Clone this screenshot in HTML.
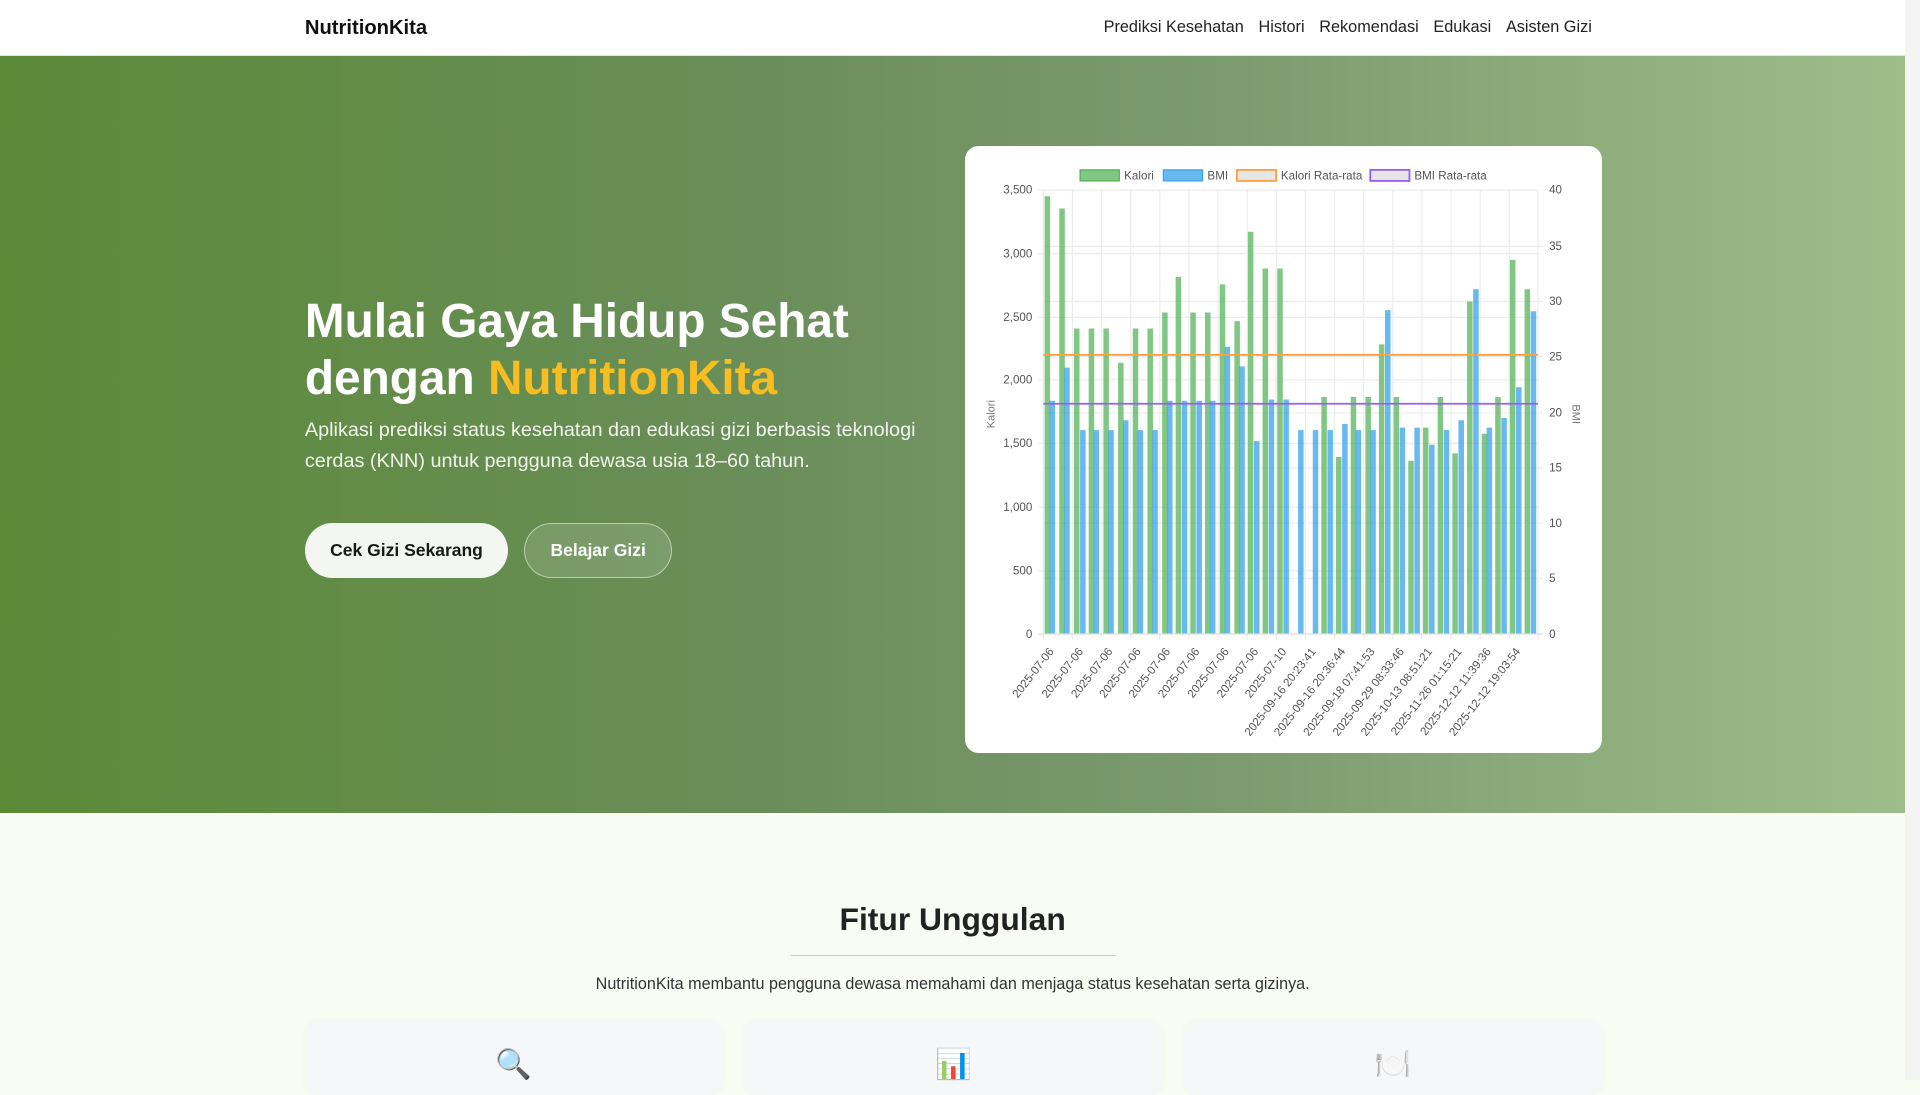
<!DOCTYPE html>
<html><head><meta charset="utf-8"><style>
html{zoom:1.22449}
*{margin:0;padding:0;box-sizing:border-box}
body{width:1568px;height:882px;overflow:hidden;position:relative;font-family:"Liberation Sans",sans-serif;background:#f9fcf3}
.nav{position:absolute;left:0;top:0;width:1556px;height:46px;background:#fff;border-bottom:1px solid #e6e6e6}
.brand{position:absolute;left:249px;top:14px;font-weight:bold;font-size:16.5px;color:#111}
.links{position:absolute;right:256px;top:15px;font-size:13.3px;color:#222}
.links span{margin-left:12px}
.hero{position:absolute;left:0;top:46px;width:1556px;height:618px;background:linear-gradient(90deg,#5b8a37 0%,#6a8e5a 40%,#7c9c6f 65%,#9dbd89 100%)}
h1{position:absolute;left:249px;top:239px;font-size:39px;line-height:47px;color:#fff;font-weight:bold}
h1 em{font-style:normal;color:#f7bd21}
.sub{position:absolute;left:249px;top:339px;width:520px;font-size:16.2px;line-height:25px;color:#f2f5ee}
.b1{position:absolute;left:249px;top:427px;width:166px;height:45px;border-radius:23px;background:#f4f6f2;color:#1a1a1a;font-weight:bold;font-size:14.3px;text-align:center;line-height:45px}
.b2{position:absolute;left:428px;top:427px;width:121px;height:45px;border-radius:23px;background:rgba(255,255,255,.13);border:1px solid rgba(255,255,255,.5);color:#fff;font-weight:bold;font-size:14.3px;text-align:center;line-height:43px}
.card{position:absolute;left:788px;top:119px;width:520px;height:496px;background:#fff;border-radius:11px}
.sb{position:absolute;left:1556px;top:0;width:12px;height:882px;background:#f4f4f4}
h2{position:absolute;left:0;width:1556px;text-align:center;top:736px;font-size:26px;color:#222}
.hr{position:absolute;left:646px;top:780px;width:265px;height:1px;background:#ccc}
.p{position:absolute;left:0;width:1556px;text-align:center;top:796px;font-size:13.2px;color:#333}
.f{position:absolute;top:834px;width:341px;height:60px;background:#f6f7f9;border-radius:12px;box-shadow:0 0 6px rgba(0,0,0,.04);text-align:center;font-size:24px;padding-top:22px}
</style></head><body>
<div class="nav"><div class="brand">NutritionKita</div><div class="links"><span>Prediksi Kesehatan</span><span>Histori</span><span>Rekomendasi</span><span>Edukasi</span><span>Asisten Gizi</span></div></div>
<div class="hero"></div>
<h1>Mulai Gaya Hidup Sehat<br>dengan <em>NutritionKita</em></h1>
<div class="sub">Aplikasi prediksi status kesehatan dan edukasi gizi berbasis teknologi cerdas (KNN) untuk pengguna dewasa usia 18–60 tahun.</div>
<div class="b1">Cek Gizi Sekarang</div><div class="b2">Belajar Gizi</div>
<div class="card"><svg width="520" height="496" viewBox="788 119 520 496" font-family="Liberation Sans,sans-serif" font-size="9.5" fill="#555">
<g stroke="#ececec" stroke-width="1">
<line x1="848" y1="155" x2="1256" y2="155"/><line x1="848" y1="207" x2="1256" y2="207"/><line x1="848" y1="259" x2="1256" y2="259"/><line x1="848" y1="310" x2="1256" y2="310"/><line x1="848" y1="362" x2="1256" y2="362"/><line x1="848" y1="414" x2="1256" y2="414"/><line x1="848" y1="466" x2="1256" y2="466"/>
<line x1="852" y1="201" x2="1260" y2="201"/><line x1="852" y1="246" x2="1260" y2="246"/><line x1="852" y1="291" x2="1260" y2="291"/><line x1="852" y1="337" x2="1260" y2="337"/><line x1="852" y1="382" x2="1260" y2="382"/><line x1="852" y1="427" x2="1260" y2="427"/><line x1="852" y1="472" x2="1260" y2="472"/>
<line x1="852" y1="155" x2="852" y2="522"/><line x1="875.8" y1="155" x2="875.8" y2="522"/><line x1="899.6" y1="155" x2="899.6" y2="522"/><line x1="923.3" y1="155" x2="923.3" y2="522"/><line x1="947.1" y1="155" x2="947.1" y2="522"/><line x1="970.9" y1="155" x2="970.9" y2="522"/><line x1="994.7" y1="155" x2="994.7" y2="522"/><line x1="1018.5" y1="155" x2="1018.5" y2="522"/><line x1="1042.2" y1="155" x2="1042.2" y2="522"/><line x1="1066" y1="155" x2="1066" y2="522"/><line x1="1089.8" y1="155" x2="1089.8" y2="522"/><line x1="1113.6" y1="155" x2="1113.6" y2="522"/><line x1="1137.4" y1="155" x2="1137.4" y2="522"/><line x1="1161.1" y1="155" x2="1161.1" y2="522"/><line x1="1184.9" y1="155" x2="1184.9" y2="522"/><line x1="1208.7" y1="155" x2="1208.7" y2="522"/><line x1="1232.5" y1="155" x2="1232.5" y2="522"/><line x1="1256" y1="155" x2="1256" y2="522"/>
</g>
<line x1="848" y1="517.5" x2="1260" y2="517.5" stroke="#ddd"/>
<g>
<path fill="rgba(76,175,80,.7)" d="M853 160h4.5V517H853ZM865 170h4.5V517H865ZM877 268h4.5V517H877ZM889 268h4.5V517H889ZM901 268h4.5V517H901ZM913 296h4.5V517H913ZM925 268h4.5V517H925ZM937 268h4.5V517H937ZM949 255h4.5V517H949ZM960 226h4.5V517H960ZM972 255h4.5V517H972ZM984 255h4.5V517H984ZM996 232h4.5V517H996ZM1008 262h4.5V517H1008ZM1019 189h4.5V517H1019ZM1031 219h4.5V517H1031ZM1043 219h4.5V517H1043ZM1079 324h4.5V517H1079ZM1091 373h4.5V517H1091ZM1103 324h4.5V517H1103ZM1115 324h4.5V517H1115ZM1126 281h4.5V517H1126ZM1138 324h4.5V517H1138ZM1150 376h4.5V517H1150ZM1162 349h4.5V517H1162ZM1174 324h4.5V517H1174ZM1186 370h4.5V517H1186ZM1198 246h4.5V517H1198ZM1210 354h4.5V517H1210ZM1221 324h4.5V517H1221ZM1233 212h4.5V517H1233ZM1245 236h4.5V517H1245Z"/>
<path fill="rgba(54,162,235,.75)" d="M857 327h4.5V517H857ZM869 300h4.5V517H869ZM882 351h4.5V517H882ZM893 351h4.5V517H893ZM905 351h4.5V517H905ZM917 343h4.5V517H917ZM929 351h4.5V517H929ZM941 351h4.5V517H941ZM953 327h4.5V517H953ZM965 327h4.5V517H965ZM977 327h4.5V517H977ZM988 327h4.5V517H988ZM1000 283h4.5V517H1000ZM1012 299h4.5V517H1012ZM1024 360h4.5V517H1024ZM1036 326h4.5V517H1036ZM1048 326h4.5V517H1048ZM1060 351h4.5V517H1060ZM1072 351h4.5V517H1072ZM1084 351h4.5V517H1084ZM1096 346h4.5V517H1096ZM1107 351h4.5V517H1107ZM1119 351h4.5V517H1119ZM1131 253h4.5V517H1131ZM1143 349h4.5V517H1143ZM1155 349h4.5V517H1155ZM1167 363h4.5V517H1167ZM1179 351h4.5V517H1179ZM1191 343h4.5V517H1191ZM1203 236h4.5V517H1203ZM1214 349h4.5V517H1214ZM1226 341h4.5V517H1226ZM1238 316h4.5V517H1238ZM1250 254h4.5V517H1250Z"/>
</g>
<line x1="852" y1="289.5" x2="1256" y2="289.5" stroke="#ffa040" stroke-width="1.5"/>
<line x1="852" y1="329.5" x2="1256" y2="329.5" stroke="#9c5cf0" stroke-width="1.5"/>
<g text-anchor="end"><text x="843" y="158">3,500</text><text x="843" y="210">3,000</text><text x="843" y="262">2,500</text><text x="843" y="313">2,000</text><text x="843" y="365">1,500</text><text x="843" y="417">1,000</text><text x="843" y="469">500</text><text x="843" y="521">0</text></g>
<g><text x="1265" y="158">40</text><text x="1265" y="204">35</text><text x="1265" y="249">30</text><text x="1265" y="294">25</text><text x="1265" y="340">20</text><text x="1265" y="385">15</text><text x="1265" y="430">10</text><text x="1265" y="475">5</text><text x="1265" y="521">0</text></g>
<text transform="translate(812 338) rotate(-90)" text-anchor="middle" font-size="9" fill="#777">Kalori</text>
<text transform="translate(1284 338) rotate(90)" text-anchor="middle" font-size="9" fill="#777">BMI</text>
<rect x="882" y="138.5" width="32" height="9" fill="rgba(76,175,80,.7)" stroke="#4caf50"/><text x="918" y="146.5">Kalori</text>
<rect x="950" y="138.5" width="32" height="9" fill="rgba(54,162,235,.75)" stroke="#36a2eb"/><text x="986" y="146.5">BMI</text>
<rect x="1010" y="138.5" width="32" height="9" fill="#e6e6e6" stroke="#ffa040" stroke-width="1.5"/><text x="1046" y="146.5">Kalori Rata-rata</text>
<rect x="1119" y="138.5" width="32" height="9" fill="#e6e6e6" stroke="#9c5cf0" stroke-width="1.5"/><text x="1155" y="146.5">BMI Rata-rata</text>
<g text-anchor="end" font-size="9.5">
<text transform="translate(861 532) rotate(-52)">2025-07-06</text>
<text transform="translate(885 532) rotate(-52)">2025-07-06</text>
<text transform="translate(909 532) rotate(-52)">2025-07-06</text>
<text transform="translate(932 532) rotate(-52)">2025-07-06</text>
<text transform="translate(956 532) rotate(-52)">2025-07-06</text>
<text transform="translate(980 532) rotate(-52)">2025-07-06</text>
<text transform="translate(1004 532) rotate(-52)">2025-07-06</text>
<text transform="translate(1028 532) rotate(-52)">2025-07-06</text>
<text transform="translate(1051 532) rotate(-52)">2025-07-10</text>
<text transform="translate(1075 532) rotate(-52)">2025-09-16 20:23:41</text>
<text transform="translate(1099 532) rotate(-52)">2025-09-16 20:36:44</text>
<text transform="translate(1123 532) rotate(-52)">2025-09-18 07:41:53</text>
<text transform="translate(1147 532) rotate(-52)">2025-09-29 08:33:46</text>
<text transform="translate(1170 532) rotate(-52)">2025-10-13 08:51:21</text>
<text transform="translate(1194 532) rotate(-52)">2025-11-26 01:15:21</text>
<text transform="translate(1218 532) rotate(-52)">2025-12-12 11:39:36</text>
<text transform="translate(1242 532) rotate(-52)">2025-12-12 19:03:54</text>
</g>
</svg></div>
<h2>Fitur Unggulan</h2><div class="hr"></div>
<div class="p">NutritionKita membantu pengguna dewasa memahami dan menjaga status kesehatan serta gizinya.</div>
<div class="f" style="left:249px">🔍</div><div class="f" style="left:608px">📊</div><div class="f" style="left:967px">🍽️</div>
<div class="sb"></div>
</body></html>
